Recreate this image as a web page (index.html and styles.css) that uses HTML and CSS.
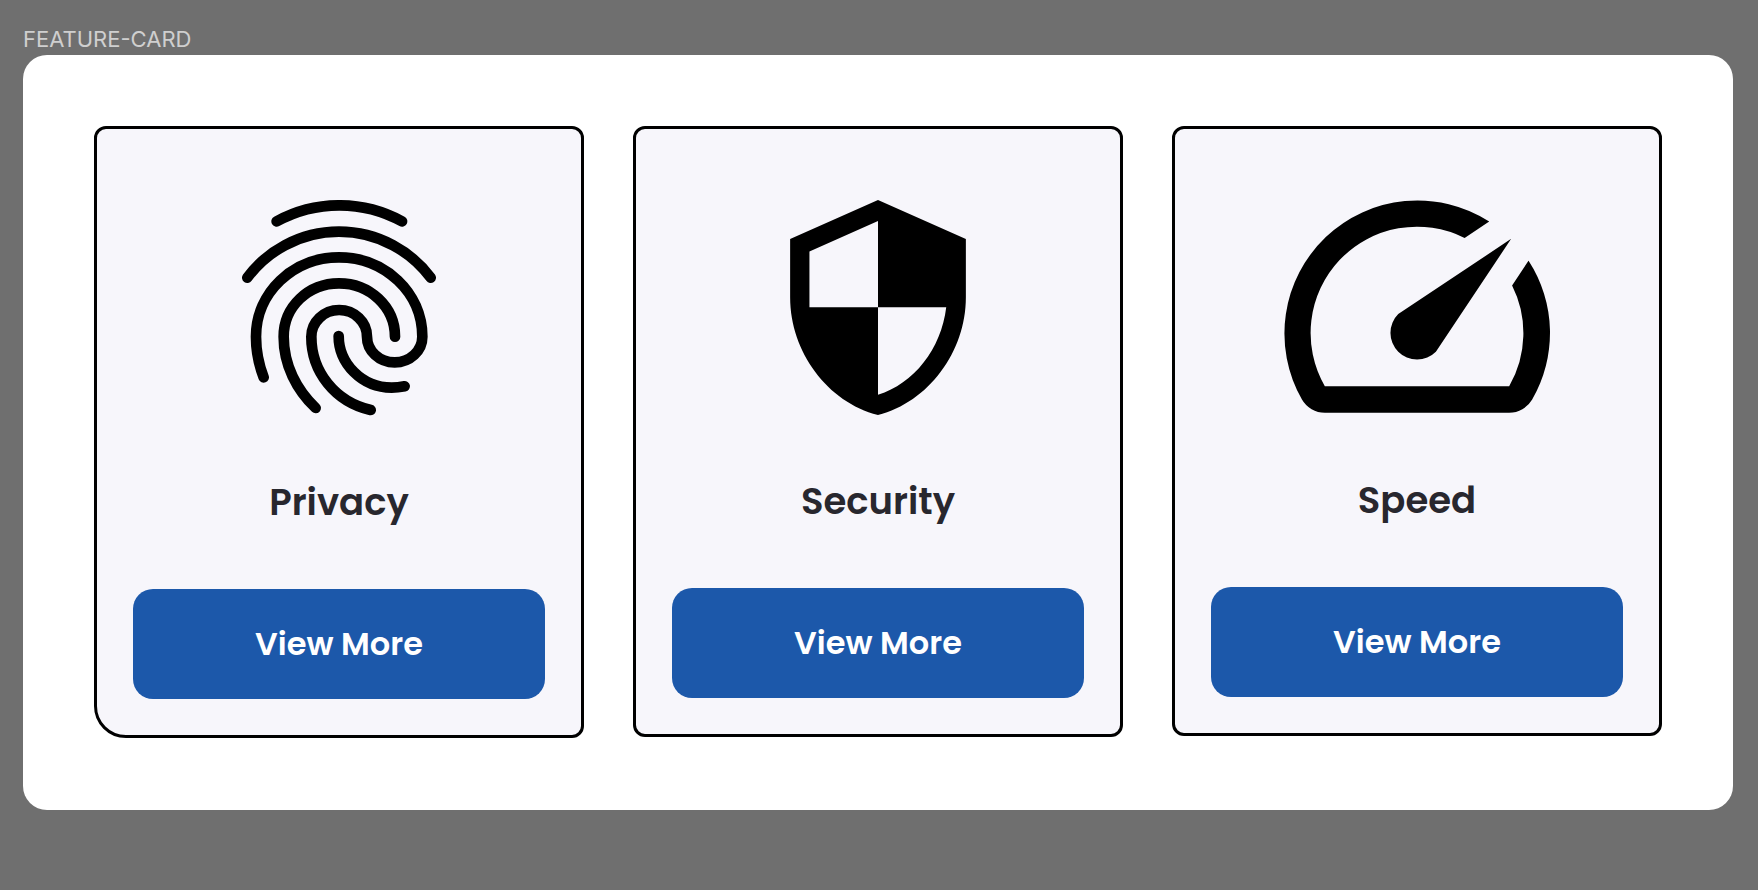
FILE: index.html
```html
<!DOCTYPE html>
<html lang="en">
<head>
<meta charset="utf-8">
<title>Feature card</title>
<link rel="stylesheet" href="styles.css">
</head>
<body>
<main class="frame">
  <p class="frame-label">FEATURE-CARD</p>
  <section class="panel">
    <article class="card card-accent">
      <svg class="icon icon-fingerprint" viewBox="66 60 582 648" aria-hidden="true">
        <g fill="none" stroke="#000" stroke-width="32" stroke-linecap="round">
          <path d="M170 124A392 392 0 0 1 546 124"/>
          <path d="M82 293A343 343 0 0 1 632 293"/>
          <path d="M131 592C115 550 108 510 108 470C108 338 219 232 357 232C495 232 607 338 607 470A83 77 0 0 1 441 470A83.500 80 0 0 0 274 470C274 575 345 665 452 690"/>
          <path d="M525 470C525 380 449 310 357 310C265 310 191 380 191 470C191 555 230 630 287 684"/>
          <path d="M356 468C356 550 425 623 515 623Q533 623 554 619"/>
        </g>
      </svg>
      <h2 class="title">Privacy</h2>
      <button class="button" type="button">View More</button>
    </article>
    <article class="card">
      <svg class="icon icon-shield" viewBox="60 60 528 646" aria-hidden="true">
        <path fill-rule="evenodd" d="M324 60L588 177V353C588 516 475 668 324 706C173 668 60 516 60 353V177ZM324 123L118 215V382H324ZM324 382V645C431 612 514 508 529 382Z"/>
      </svg>
      <h2 class="title">Security</h2>
      <button class="button" type="button">View More</button>
    </article>
    <article class="card">
      <svg class="icon icon-gauge" viewBox="2 4 20 16" preserveAspectRatio="xMinYMin meet" aria-hidden="true">
        <path d="M20.380 8.570l-1.230 1.850a8 8 0 0 1-.220 7.580H5.070A8 8 0 0 1 15.580 6.850l1.850-1.230A10 10 0 0 0 3.350 19a2 2 0 0 0 1.720 1h13.850a2 2 0 0 0 1.740-1 10 10 0 0 0-.270-10.440zM10.590 15.410a2 2 0 0 0 2.830 0l5.660-8.490-8.490 5.660a2 2 0 0 0 0 2.830z"/>
      </svg>
      <h2 class="title">Speed</h2>
      <button class="button" type="button">View More</button>
    </article>
  </section>
</main>
</body>
</html>
```
FILE: styles.css
```css
* {
  box-sizing: border-box;
}

body {
  margin: 0;
  background: #6f6f6f;
  font-family: Poppins, Inter, sans-serif;
}

.frame {
  padding: 26px 25px 80px 23px;
}

.frame-label {
  margin: 0 0 3px;
  color: #cfcfcf;
  font-family: Inter, sans-serif;
  font-size: 22px;
  line-height: 26px;
}

.panel {
  display: grid;
  grid-template-columns: repeat(3, 1fr);
  align-items: start;
  gap: 49px;
  padding: 71px 71px 72px;
  border-radius: 24px;
  background: #fff;
}

.card {
  display: flex;
  flex-direction: column;
  align-items: center;
  padding: 71px 36px 36px;
  border: 3px solid #000;
  border-radius: 12px;
  background: #f7f6fb;
}

.card-accent {
  border-bottom-left-radius: 32px;
}

.icon {
  display: block;
}

.icon-fingerprint {
  width: 194px;
  height: 216px;
}

.icon-shield {
  width: 176px;
  height: 215px;
}

.icon-gauge {
  width: 266px;
  height: 214px;
}

.title {
  margin: 56px 0 57px;
  color: #28272e;
  font-size: 37px;
  font-weight: 600;
  line-height: 60px;
}

.button {
  width: 100%;
  padding: 30px 16px;
  border: 0;
  border-radius: 20px;
  background: #1c58aa;
  color: #fff;
  font-family: inherit;
  font-size: 32px;
  font-weight: 600;
  line-height: 50px;
  cursor: pointer;
}
```
